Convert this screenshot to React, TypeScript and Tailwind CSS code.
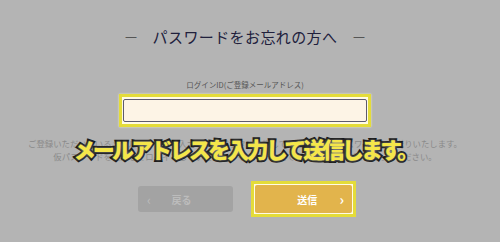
import React from "react";

export default function App() {
  const jp = { fontFamily: '"Noto Sans CJK JP", "Noto Sans", sans-serif' };
  return (
    <div
      className="relative w-[500px] h-[242px] overflow-hidden bg-[#b4b4b4] flex flex-col items-center pr-[10px]"
      style={jp}
    >
      <div className="pt-[28px] flex items-center text-[15px] leading-[18px] text-[#20203c]">
        <span className="text-[#555] mr-[14px]">－</span>
        <span className="tracking-[0.4px]">パスワードをお忘れの方へ</span>
        <span className="text-[#555] ml-[14px]">－</span>
      </div>

      <div className="mt-[34px] text-[7.5px] leading-[10px] text-[#555]">
        ログインID(ご登録メールアドレス)
      </div>

      <div className="mt-[4px] w-[252px] border-[3px] border-[#e4dc3a] bg-[#fffbe6] px-[1px] py-[2px] shadow-[0_0_2px_rgba(255,255,200,0.8)]">
        <div className="h-[23px] rounded-[2px] border border-[#5c5a6e] bg-[#fdf4e6]" />
      </div>

      <div className="mt-[10px] flex flex-col items-center text-[8.4px] leading-[13px] text-[#8a8a8a]">
        <span>ご登録いただいているメールアドレスを入力し、送信ボタンを押してください。仮パスワードをお送りいたします。</span>
        <span>仮パスワードを使用してログインしていただき、マイページにてパスワードの変更を行ってください。</span>
      </div>

      <div className="mt-[18px] flex items-center gap-[18px] pl-[4px]">
        <div className="w-[95px] h-[26px] rounded-[3px] bg-[#a3a3a3] flex items-center px-[9px] text-[10px] font-bold text-[#bcbcbc]">
          <span className="text-[13px] font-normal leading-none">‹</span>
          <span className="flex-1 text-center pr-[12px]">戻る</span>
        </div>
        <div className="w-[105px] border-[3px] border-[#e4dc3a] bg-[#fffbe6] p-[1px]">
          <div className="h-[28px] rounded-[2px] bg-[#e2b44c] flex items-center px-[8px] text-[10px] font-bold text-white">
            <span className="flex-1 text-center pl-[12px]">送信</span>
            <span className="text-[14px] leading-none">›</span>
          </div>
        </div>
      </div>

      <div className="absolute left-0 right-[10px] top-[133px] flex justify-center pointer-events-none">
        <span
          className="text-[22px] leading-[30px] font-black tracking-[-2.8px] text-[#f4e64a] [paint-order:stroke_fill] [-webkit-text-stroke:4px_#141414] [text-shadow:0_0_3px_rgba(255,255,255,0.6)]"
        >
          メールアドレスを入力して送信します。
        </span>
      </div>
    </div>
  );
}
